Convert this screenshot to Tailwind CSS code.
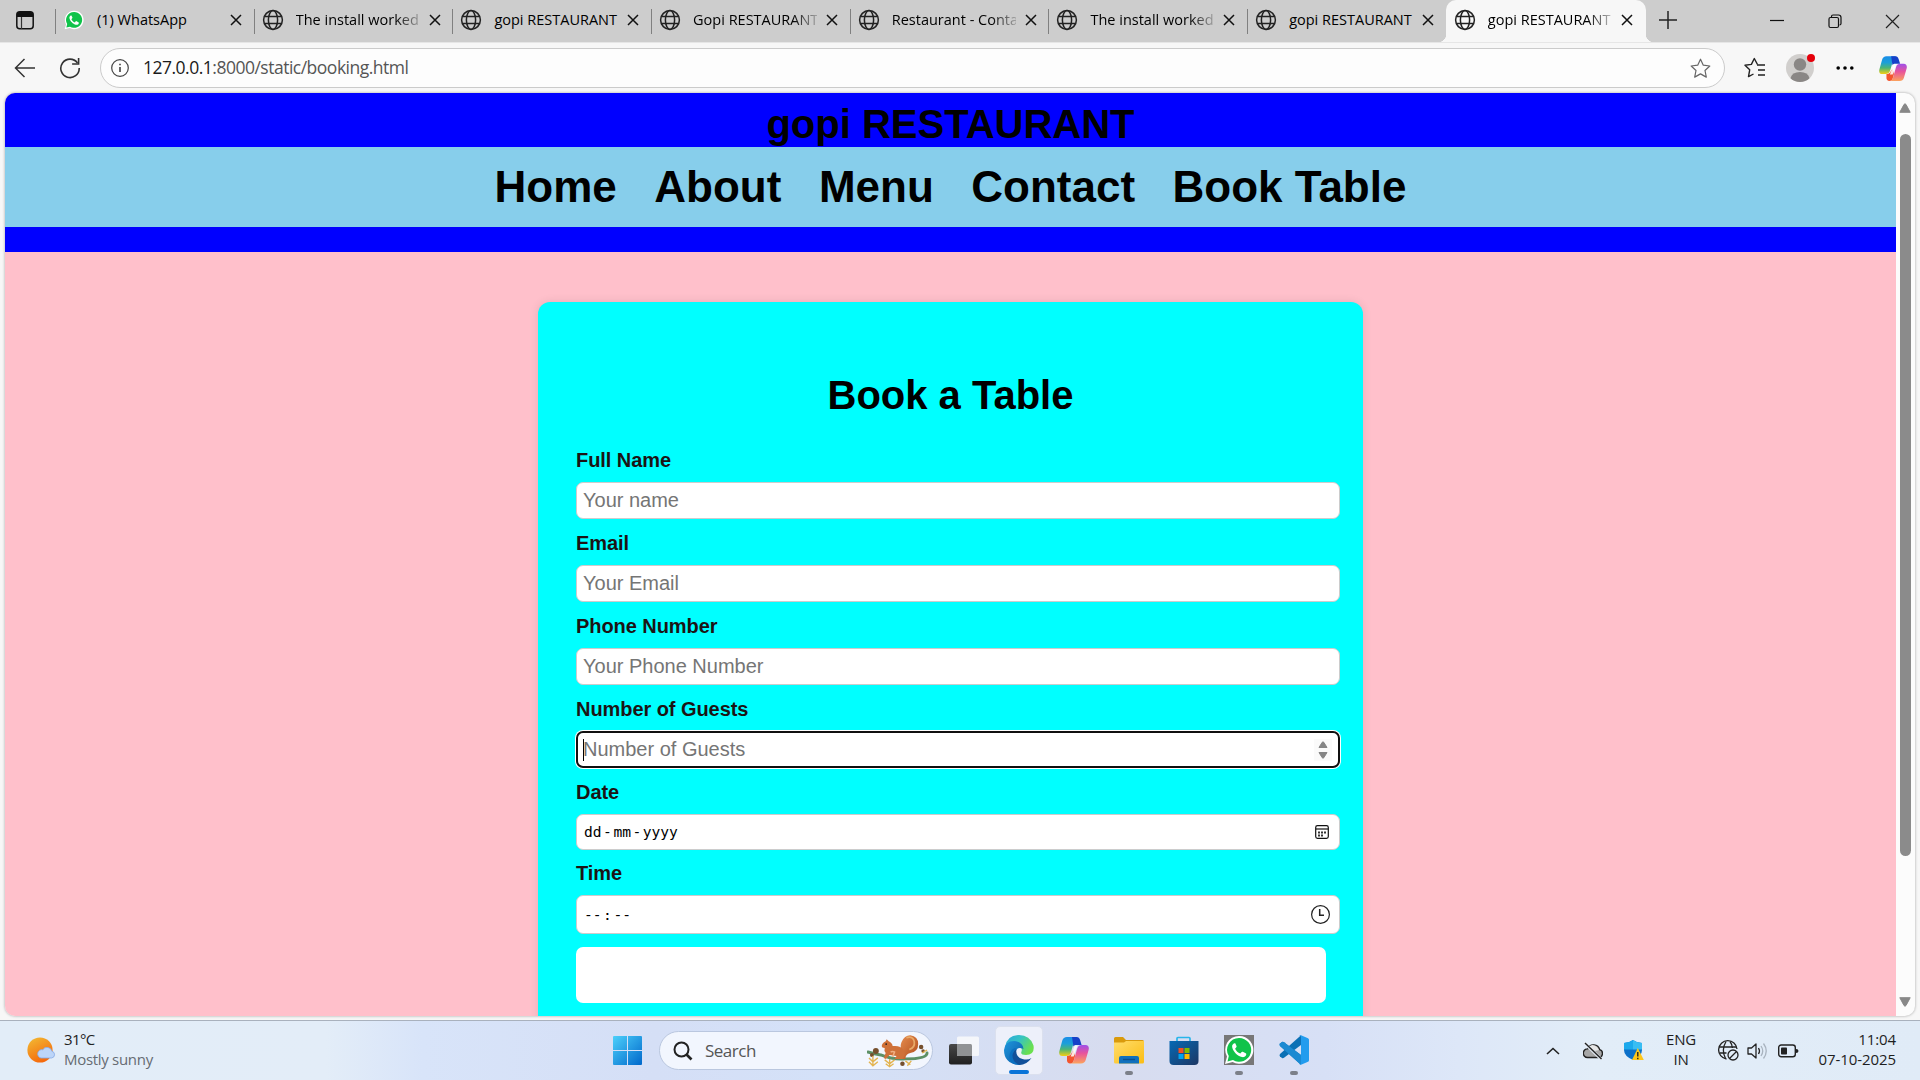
<!DOCTYPE html>
<html lang="en">
<head>
<meta charset="utf-8">
<title>gopi RESTAURANT</title>
<script src="https://cdn.jsdelivr.net/npm/@tailwindcss/browser@4"></script>
</head>
<body class="w-[1920px] h-[1080px] overflow-hidden flex flex-col bg-[#f7f7f7] font-['Open_Sans',sans-serif] text-black">
<svg width="0" height="0" class="absolute">
  <defs>
    <linearGradient id="cpA" x1="0" y1="0" x2="0" y2="1"><stop offset="0" stop-color="#1a8de8"/><stop offset=".35" stop-color="#1c9fd9"/><stop offset=".65" stop-color="#4cb576"/><stop offset="1" stop-color="#f7cf12"/></linearGradient>
    <linearGradient id="cpB" x1="0" y1="0" x2="0" y2="1"><stop offset="0" stop-color="#9f50e8"/><stop offset=".45" stop-color="#e8549c"/><stop offset="1" stop-color="#fca35c"/></linearGradient>
    <linearGradient id="winG" x1="0" y1="0" x2="1" y2="1"><stop offset="0" stop-color="#4cd0fb"/><stop offset="1" stop-color="#0068cb"/></linearGradient>
    <linearGradient id="sunG" x1="0" y1="0" x2=".5" y2="1"><stop offset="0" stop-color="#f2bd35"/><stop offset="1" stop-color="#f56a0c"/></linearGradient>
    <linearGradient id="edgeT" x1="0" y1="0" x2="1" y2=".5"><stop offset="0" stop-color="#2aa5dc"/><stop offset=".5" stop-color="#35c3c4"/><stop offset="1" stop-color="#6be04f"/></linearGradient>
    <linearGradient id="edgeB" x1="0" y1="0" x2="1" y2="1"><stop offset="0" stop-color="#1e96dd"/><stop offset="1" stop-color="#0c59a4"/></linearGradient>
    <linearGradient id="foldG" x1="0" y1="0" x2="1" y2="1"><stop offset="0" stop-color="#ffdc6b"/><stop offset="1" stop-color="#fbbd13"/></linearGradient>
    <linearGradient id="storeG" x1="0" y1="0" x2="1" y2="1"><stop offset="0" stop-color="#0669b4"/><stop offset="1" stop-color="#1d3764"/></linearGradient>
    <linearGradient id="tvG" x1="0" y1="0" x2="0" y2="1"><stop offset="0" stop-color="#484848"/><stop offset="1" stop-color="#202020"/></linearGradient>
    <linearGradient id="sqG" x1="0" y1="0" x2="1" y2="1"><stop offset="0" stop-color="#e58c4e"/><stop offset="1" stop-color="#b04d1c"/></linearGradient>
    <symbol id="globe" viewBox="0 0 22 22"><g fill="none" stroke="#222" stroke-width="1.5"><circle cx="11" cy="11" r="9.4"/><ellipse cx="11" cy="11" rx="4.6" ry="9.4"/><path d="M2.5 7.6h17M2.5 14.4h17"/></g></symbol>
    <symbol id="close" viewBox="0 0 12 12"><path d="M1 1l10 10M11 1L1 11" fill="none" stroke="#111" stroke-width="1.5"/></symbol>
    <symbol id="wa" viewBox="0 0 30 30"><path d="M15 1a13.8 13.8 0 0 0-12 20.6L1 29l7.600-2A13.900 13.900 0 1 0 15 1z" fill="#fff"/><path d="M15 3a11.900 11.900 0 0 0-10.200 18L3.500 26.400 9 25A11.900 11.900 0 1 0 15 3z" fill="#10c34a"/><path d="M10.500 8.200c-1.500.3-2.800 2-2.300 4.100 1 4.500 5.200 8.700 9.700 9.800 2 .4 3.900-.6 4.300-2.300.2-.9 0-1.300-.5-1.600l-2.900-1.400c-.6-.3-1-.1-1.400.4l-1.100 1.400c-2.300-.8-4.200-2.600-5.200-4.900l1.200-1.500c.4-.4.4-.8.200-1.200l-1.100-2.400c-.2-.4-.5-.5-.9-.4z" fill="#fff"/></symbol>
    <symbol id="copilot" viewBox="0 0 30 28"><path d="M8 1h11.500c-2 0-3.600 1.500-4.200 3.600L12 16c-.8 3-2.500 4-5 4H3.500C.5 20-.3 17.500.4 15L3.300 4.600C4 2.300 5.500 1 8 1z" fill="url(#cpA)"/><path d="M13 1h4.500c2 0 3 1.200 3.600 3.100L22.600 9h-5.200c-1.600 0-2.600.6-3 1.600z" fill="#1641c8"/><path d="M22 27.500H11c2 0 3.500-1.500 4-3.600l3.200-11.300C19 10 20.500 9 23 9h3.500c3 0 3.800 2.500 3.100 5l-2.900 10c-.7 2.300-2.200 3.500-4.700 3.500z" fill="url(#cpB)"/><path d="M8 20c2.500 0 4-1 4.600-3l2.100-3 1.300 6-1.200 4.200c-.6 2-1.800 3.300-3.800 3.300-1.700 0-2.600-1-3-2.700z" fill="#f4552e"/><path d="M15.700 9.500h2.800l-3.800 11h-3z" fill="#fff" opacity=".85"/></symbol>
  </defs>
</svg>

<!-- Tab strip -->
<div class="h-[42px] shrink-0 flex bg-[#cdcdcd] text-[14.500px]">
  <div class="w-[55px] pl-[16px] pt-[11px]">
    <svg width="18" height="19" viewBox="0 0 18 19"><rect x=".8" y=".8" width="16.400" height="17" rx="3" fill="none" stroke="#111" stroke-width="1.500"/><path d="M1 6V3q0-2 2-2h12q2 0 2 2v3z" fill="#111"/><path d="M5.500 6v12" stroke="#333" stroke-width="1.200"/></svg>
  </div>
  <div id="tabs" class="flex h-[42px]"></div>
  <div class="flex-1 flex">
    <svg class="ml-[13px] mt-[11px]" width="18" height="18" viewBox="0 0 18 18"><path d="M9 0v18M0 9h18" stroke="#222" stroke-width="1.500"/></svg>
    <svg class="ml-[93px] mt-[14px]" width="14" height="14"><path d="M0 6.500h14" stroke="#111" stroke-width="1.200"/></svg>
    <svg class="ml-[44px] mt-[14px]" width="15" height="15" fill="none" stroke="#111" stroke-width="1.200"><rect x="1" y="3.500" width="9.500" height="10" rx="1.500"/><path d="M3.500 3V2.500q0-1.500 1.500-1.500h5.500q2.500 0 2.500 2.500v6q0 1.500-1.500 1.500"/></svg>
    <svg class="ml-[42px] mt-[14px]" width="15" height="15"><path d="M1 1l13 13M14 1L1 14" stroke="#222" stroke-width="1.200"/></svg>
  </div>
</div>

<!-- Toolbar -->
<div class="h-[51px] shrink-0 flex items-center border-t border-[#e6e6e6] bg-[#f7f7f7] pl-[14px]">
  <svg width="22" height="20" viewBox="0 0 22 20" fill="none" stroke="#333" stroke-width="1.500"><path d="M21 10H2M10.500 1L1.500 10l9 9"/></svg>
  <svg class="ml-[23px]" width="22" height="22" viewBox="0 0 22 22" fill="none" stroke="#333" stroke-width="1.600"><path d="M18.500 6A9.200 9.200 0 1 0 20.200 11"/><path d="M19.600 1v6h-6.500"/></svg>
  <div class="ml-[19px] w-[1625px] h-[40px] rounded-full border border-[#cbcbcb] bg-[#fdfdfd] flex items-center pl-[10px] pr-[13px]">
    <svg width="18" height="18" viewBox="0 0 18 18"><circle cx="9" cy="9" r="8.300" fill="none" stroke="#444" stroke-width="1.200"/><path d="M9 8v5M9 4.800v1.500" stroke="#333" stroke-width="1.500"/></svg>
    <span class="ml-[14px] text-[17.500px] tracking-[-0.5px] text-[#555] leading-none"><span class="text-[#1a1a1a]">127.0.0.1</span>:8000/static/booking.html</span>
    <svg class="ml-auto" width="21" height="21" viewBox="0 0 21 21"><path d="M10.500 1.200l2.800 6 6.500.8-4.800 4.500 1.300 6.600-5.800-3.200-5.800 3.200L6 12.500 1.200 8l6.500-.8z" fill="none" stroke="#666" stroke-width="1.200" stroke-linejoin="round"/></svg>
  </div>
  <svg class="ml-[19px] mr-px" width="22" height="22" viewBox="0 0 22 22" fill="none" stroke="#222" stroke-width="1.400" stroke-linejoin="round"><path d="M13.500 7.500L10.300 1.500 7.400 7.400 1 8.300l4.700 4.500-1.200 6.800 5-2.600"/><path d="M13 8h8M14 13h7M14 18h7"/></svg>
  <div class="relative ml-[19px]">
    <svg width="28" height="28" viewBox="0 0 28 28"><circle cx="14" cy="14" r="14" fill="#d1cfcd"/><circle cx="14" cy="10.500" r="6.200" fill="#8a8785"/><path d="M4.500 24.200Q6 18 14 18t9.500 6.200Q19.500 28 14 28t-9.500-3.800z" fill="#8a8785"/></svg>
    <div class="absolute left-[21px] top-0 size-[8px] rounded-full bg-[#e5000b]"></div>
  </div>
  <svg class="ml-[22px]" width="18" height="4"><circle cx="2.200" cy="2" r="1.800"/><circle cx="9" cy="2" r="1.800"/><circle cx="15.800" cy="2" r="1.800"/></svg>
  <svg class="ml-[25px]" width="28" height="27"><use href="#copilot"/></svg>
</div>

<!-- Page viewport -->
<div class="h-[927px] shrink-0 pl-[5px] pr-[5px]">
<div class="h-[923px] flex overflow-hidden rounded-[10px] shadow-[0_0_3px_rgba(0,0,0,0.35)] bg-[#fcfcfc] font-['Liberation_Sans',Arial,sans-serif] font-bold">
  <div class="w-[1891px] h-full bg-[#ffc0cb] overflow-hidden">
    <header class="h-[159px] bg-[#0000ff] flex flex-col">
      <h1 class="h-[54px] pt-[8px] text-center text-[40px] leading-[46px]">gopi RESTAURANT</h1>
      <nav class="h-[80px] bg-[#87ceeb] flex justify-center gap-[37.500px] text-[44px] leading-[51px] pt-[14px]">
        <a>Home</a><a>About</a><a>Menu</a><a>Contact</a><a>Book Table</a>
      </nav>
    </header>
    <main class="mt-[50px] mx-auto w-[825px] h-[800px] rounded-[12px] bg-[#00ffff] shadow-[0_0_10px_rgba(0,0,0,0.1)] pl-[38px] pr-[23px] pt-[70px]">
      <h2 class="h-[74px] -ml-[15px] text-center text-[40px] leading-[46px]">Book a Table</h2>
      <form class="flex flex-col text-[20px] leading-[23px] text-[#1c1414]">
        <label class="h-[36px] pt-[3px] tracking-[-0.06px]">Full Name</label>
        <div class="h-[37px] rounded-[7px] border border-[#ccc] bg-white px-[6px] leading-[35px] font-normal text-[#757575]">Your name</div>
        <label class="h-[46px] pt-[13px] tracking-[-0.06px]">Email</label>
        <div class="h-[37px] rounded-[7px] border border-[#ccc] bg-white px-[6px] leading-[35px] font-normal text-[#757575]">Your Email</div>
        <label class="h-[46px] pt-[13px] tracking-[-0.06px]">Phone Number</label>
        <div class="h-[37px] rounded-[7px] border border-[#ccc] bg-white px-[6px] leading-[35px] font-normal text-[#757575]">Your Phone Number</div>
        <label class="h-[46px] pt-[13px] tracking-[-0.06px]">Number of Guests</label>
        <div class="h-[37px] rounded-[7px] border-2 border-[#101010] ring-1 ring-white bg-white pl-[5px] pr-[6px] flex items-center font-normal text-[#757575]">
          <span class="w-px h-[22px] bg-black -mr-px"></span><span class="leading-[33px]">Number of Guests</span>
          <span class="ml-auto w-[18px] h-[22px] bg-[#fafafa] flex items-center justify-center"><svg width="10" height="18"><path d="M1 6.500h8L5.800 1.300q-.8-1-1.600 0zM1 11.500h8l-3.200 5.200q-.8 1-1.600 0z" fill="#858585"  stroke="#858585"/></svg></span>
        </div>
        <label class="h-[46px] pt-[13px] tracking-[-0.06px]">Date</label>
        <div class="h-[36px] rounded-[7px] border border-[#ccc] bg-white pl-[7px] pr-[10px] flex items-center font-normal text-black font-['DejaVu_Sans_Mono',monospace] text-[14.600px]">
          <div class="flex pb-[2px]"><span>dd</span><span class="px-[1.500px]">-</span><span>mm</span><span class="px-[1.500px]">-</span><span>yyyy</span></div>
          <svg class="ml-auto" width="14" height="14"><rect x=".7" y=".7" width="12.600" height="12.600" rx="1.800" fill="none" stroke="#111" stroke-width="1.200"/><path d="M1 4h12" stroke="#111" stroke-width="1.200"/><path d="M3 7.500h8" stroke="#333" stroke-width="2" stroke-dasharray="2 1"/><path d="M3 10.500h5" stroke="#333" stroke-width="2" stroke-dasharray="2 1"/></svg>
        </div>
        <label class="h-[45px] pt-[12px] tracking-[-0.06px]">Time</label>
        <div class="h-[39px] rounded-[7px] border border-[#ccc] bg-white pl-[7px] pr-[9px] flex items-center font-normal text-black font-['DejaVu_Sans_Mono',monospace] text-[14.600px]">
          <span>--</span><span class="px-[1.500px]">:</span><span>--</span>
          <svg class="ml-auto" width="19" height="19" fill="none" stroke="#222"><circle cx="9.500" cy="9.500" r="8.900" stroke-width="1.200"/><path d="M8.700 4v6.200h4.300" stroke-width="1.500"/></svg>
        </div>
        <div class="mt-[13px] w-[750px] h-[56px] rounded-[7px] bg-white"></div>
      </form>
    </main>
  </div>
  <div class="flex-1 flex flex-col items-center pt-[10px] pb-[9px] pr-px">
    <svg width="12" height="10"><path d="M.8 9.300L5 1.500q1-1.500 2 0l4.200 7.800z" fill="#888" stroke="#888"/></svg>
    <div class="mt-[21px] w-[11px] h-[722px] rounded-full bg-[#8b8b8b]"></div>
    <svg class="mt-auto" width="12" height="10"><path d="M.8.700L5 8.500q1 1.500 2 0L11.200.700z" fill="#888" stroke="#888"/></svg>
  </div>
</div>
</div>

<!-- Taskbar -->
<footer class="h-[60px] shrink-0 flex items-center border-t border-[#a9b1bd] bg-[linear-gradient(90deg,#e2edf8_0%,#e3edf8_17%,#d8e4f9_22%,#d5dff6_34%,#d4e1f8_43%,#d7dcef_58%,#d7e0f6_69%,#dde7f8_76%,#e2edf8_83%,#e0ebf7_100%)]">
  <div class="w-[600px] flex items-center pl-[26px]">
    <svg width="30" height="28" viewBox="0 0 30 28"><circle cx="14" cy="13" r="12.600" fill="url(#sunG)"/><path d="M15 21h10.500a3.400 3.400 0 0 0 .4-6.700 5 5 0 0 0-9.100-1.600A4.200 4.200 0 0 0 15 21z" fill="#bcd5f8" stroke="#86a9e5" stroke-width=".8"/></svg>
    <div class="ml-[8px] pb-[4px] text-[15px] leading-[20px] tracking-[-0.3px]"><div class="text-[#222] tracking-[-0.6px]">31°C</div><div class="text-[#666b72]">Mostly sunny</div></div>
  </div>
  <div class="w-[59px] flex pl-[13px]">
    <svg width="29" height="29"><path d="M0 1q0-1 1-1h13v14H0zM15 0h13q1 0 1 1v13H15zM0 15h14v14H1q-1 0-1-1zM15 15h14v13q0 1-1 1H15z" fill="url(#winG)"/></svg>
  </div>
  <div class="w-[274px] h-[39px] rounded-full border border-[#bac7df] bg-[#f2f6fe] flex items-center pl-[13px] pr-[2px]">
    <svg width="20" height="20" fill="none" stroke="#222"><circle cx="8.500" cy="8.500" r="7" stroke-width="2"/><path d="M13.500 13.500l5 5" stroke-width="2.600"/></svg>
    <span class="ml-[12px] text-[17px] tracking-[-0.5px] text-[#555]">Search</span>
    <svg class="ml-auto" width="63" height="34" viewBox="0 0 64 34">
      <path d="M1 18q7 2 13 3 12 5 25 4 22 0 22-6" fill="none" stroke="#5d9066" stroke-width="3" stroke-linecap="round"/>
      <path d="M35 25l1-6q-3-6-1-11 3-7 9-7 8 1 8 9 0 8-8 9-5 1-5 6z" fill="url(#sqG)"/><path d="M40 3.500q7-2 8 4t-5 8" fill="none" stroke="#e8aa69" stroke-width="1.800"/>
      <path d="M15 12q0-3 4-5l1-2 2 2q4 2 4 5 8-1 11 4 3 6-1 9h-8l2-3-7-1-4 4-2-1 2-5q-2-2-1-5-3 0-3-2z" fill="#cf7139"/>
      <path d="M24 18q2-1 4 0l-2 5" fill="none" stroke="#f0b083" stroke-width="1.500"/><circle cx="19.500" cy="10" r=".9" fill="#222"/>
      <g fill="#76502d"><circle cx="9" cy="17" r="3"/><circle cx="5" cy="21" r="2"/><circle cx="55" cy="13" r="2.300"/><circle cx="36" cy="30" r="2.300"/><circle cx="57" cy="17" r="1.800"/></g>
      <g fill="none" stroke="#e3b451" stroke-width="1.400"><path d="M6 22v9M2 24l4 4 5-4M2 28l4 4 5-4M23 25v8M18 26l5 4 5-4M19 30l4 3 4-3M39 27l5 4M41 32l4-5M56 19l5-3"/></g>
    </svg>
  </div>
  <div class="w-[58px] flex pl-[16px]">
    <svg width="30" height="29"><rect x="0" y="8" width="23" height="20.500" rx="2" fill="url(#tvG)"/><rect x="8" y=".5" width="22" height="19.500" rx="1.500" fill="#f7f8fb" opacity=".9"/><path d="M8 8h13.500q1.500 0 1.500 1.500V20H9.500Q8 20 8 18.500z" fill="#909294"/></svg>
  </div>
  <div class="flex h-full items-center">
    <div class="w-[55px] h-full flex justify-center pt-[5px] items-start">
      <div class="w-[48px] h-[49px] rounded-[5px] bg-[#edf0fa] border border-[#dbe0ee] flex flex-col items-center pt-[8px]">
        <svg width="30" height="30" viewBox="0 0 30 30"><path d="M1 12Q3 0 15 0q11 0 14.500 10.500Q31 20 22 20q-6 0-4.500-3.500Q19 12 13 11 5 9 1 12z" fill="url(#edgeT)"/><path d="M0 15Q1 6 10 6q9 1 9.500 8-6-3-7.500 2-2 7 4 13.900Q0 29 0 15z" fill="url(#edgeB)"/><path d="M12.500 13Q7 17 10 23q3 5 10 5-5 3-11 .8Q4 24 6 18q2-5 6.500-5z" fill="#0b6fc0"/><path d="M12.500 14q-1.500 8 6 10 5 1.500 9-1-5 7-12 7Q8 27 8.500 20q1-4.500 4-6z" fill="#11509a"/></svg>
        <div class="mt-[5px] w-[20px] h-[4px] shrink-0 rounded-full bg-[#0a74d8]"></div>
      </div>
    </div>
    <div class="w-[55px] flex justify-center -mt-px"><svg width="30" height="28"><use href="#copilot"/></svg></div>
    <div class="w-[55px] h-full flex flex-col items-center pt-[16px]">
      <svg width="30" height="27"><path d="M0 1.500Q0 0 1.500 0H9l3 3h16.500Q30 3 30 4.500V10H0z" fill="#d99a0c"/><path d="M0 5.500h10l2-1.500h18v21q0 1.500-1.500 1.500h-27Q0 26.500 0 25z" fill="url(#foldG)"/><path d="M5 26.500V21q0-2 2-2h16q2 0 2 2v5.500z" fill="#1070bd"/><path d="M9 22.500h12" stroke="#0a4f90" stroke-width="1.400"/></svg>
      <div class="mt-[7px] w-[8px] h-[4px] rounded-full bg-[#7c8089]"></div>
    </div>
    <div class="w-[55px] flex justify-center"><svg width="30" height="30"><path d="M8 6V2.500Q8 1.500 9 1.500h11q1 0 1 1V6" fill="none" stroke="#28b5ea" stroke-width="1.700"/><path d="M.5 5h29v20q0 4-4 4h-21q-4 0-4-4z" fill="url(#storeG)"/><path d="M9.500 12h5v5h-5z" fill="#f25022"/><path d="M15.500 12h5v5h-5z" fill="#7fba00"/><path d="M9.500 18h5v5h-5z" fill="#00a4ef"/><path d="M15.500 18h5v5h-5z" fill="#ffb900"/></svg></div>
    <div class="w-[55px] h-full flex flex-col items-center pt-[14px]">
      <svg class="bg-[#777]" width="30" height="30"><use href="#wa"/></svg>
      <div class="mt-[6px] w-[8px] h-[4px] rounded-full bg-[#7c8089]"></div>
    </div>
    <div class="w-[55px] h-full flex flex-col items-center pt-[14px]">
      <svg width="30" height="30" viewBox="0 0 30 30"><path d="M1 8.500l2-1.500q1-.5 2 .2L22 20v9.700L1 11q-1-1.200 0-2.500z" fill="#0879bd"/><path d="M1 21.500L3 23q1 .5 2-.2L22 10V.3L1 19q-1 1.200 0 2.500z" fill="#0a70b5"/><path d="M22 .3l7 3q1 .5 1 1.500v20.400q0 1-1 1.500l-7 3q-1.200.3-2-.7 2 1 2-1.500v-25q0-2.500-2-1.500.8-1 2-.7z" fill="#229cee"/><path d="M1 8.500l2-1.500q1-.5 2 .2L22 20v9q-1 .5-2-.7L1 11q-1-1.200 0-2.500z" fill="#1b8ad2"/></svg>
      <div class="mt-[6px] w-[8px] h-[4px] rounded-full bg-[#7c8089]"></div>
    </div>
  </div>
  <div class="ml-auto flex items-center pr-[24px] text-[15px] leading-[20px] text-[#1e1e1e]">
    <svg width="14" height="8" fill="none" stroke="#222" stroke-width="1.600"><path d="M1 7l6-5.500L13 7"/></svg>
    <svg class="ml-[23px]" width="20" height="18"><path d="M4.500 15.500h11a4 4 0 0 0 1.200-7.800 6.300 6.300 0 0 0-12-.8 4.300 4.300 0 0 0-.2 8.600z" fill="#a7a7a7" stroke="#222" stroke-width="1.400"/><path d="M6 5Q9 1 14 5l2 3-4 1z" fill="#e6e6e6"/><path d="M1 .5l17.500 17" stroke="#e7eef7" stroke-width="3"/><path d="M2 1l16.500 16" stroke="#222" stroke-width="1.400"/></svg>
    <svg class="ml-[21px]" width="20" height="21"><path d="M9 0q4 3 9 3v7q0 6-9 10-9-4-9-10V3q5 0 9-3z" fill="#0c70c9"/><path d="M9 0v9.500H0V3q5 0 9-3z" fill="#1ba9ec"/><path d="M9 0q4 3 9 3v6.500H9z" fill="#38bdf3"/><path d="M13.800 8l6 12H8z" fill="#fec619"/><path d="M13.800 12v4.500M13.800 17.700v1.500" stroke="#222" stroke-width="1.400"/></svg>
    <div class="ml-[19px] pb-[3px] w-[36px] text-center tracking-[-0.2px]">ENG<br>IN</div>
    <svg class="ml-[19px]" width="21" height="21" fill="none" stroke="#222" stroke-width="1.300"><path d="M8.500 19A9.200 9.200 0 1 1 19 9"/><path d="M1.500 7h17M1.500 13h7M7.500 18.500Q3 10 8 1.500M12 1.500Q14 4 14.400 8"/><circle cx="15" cy="15" r="5"/><path d="M11.500 18.500l7-7"/></svg>
    <svg class="ml-[8px]" width="21" height="18" fill="none" stroke="#222" stroke-width="1.300"><path d="M1 6h3.500L9 2v14l-4.500-4H1z" stroke-linejoin="round"/><path d="M11.500 6q2 3 0 6"/><path d="M14 4q3.500 5 0 10M16.500 1.500q5.500 7.500 0 15" stroke="#a9b3bf"/></svg>
    <svg class="ml-[10px]" width="21" height="14"><rect x=".7" y="1" width="16.600" height="11.800" rx="2.500" fill="none" stroke="#222" stroke-width="1.400"/><rect x="3" y="3.500" width="6" height="7" rx=".8" fill="#222"/><path d="M18 5q2.500 0 2.500 2T18 9z" fill="#222"/></svg>
    <div class="ml-[18px] pb-[4px] w-[79px] text-right tracking-[-0.08px] whitespace-nowrap">11:04<br>07-10-2025</div>
  </div>
</footer>

<script>
const tabs = ["(1) WhatsApp","The install worked","gopi RESTAURANT","Gopi RESTAURANT","Restaurant - Conta","The install worked","gopi RESTAURANT","gopi RESTAURANT"];
document.getElementById("tabs").innerHTML = tabs.map((t, i) => {
  const active = i === tabs.length - 1;
  const fade = [1,3,4,5,7].includes(i) ? "[mask-image:linear-gradient(90deg,#000_80%,rgba(0,0,0,0.2)_100%)]" : "";
  const icon = i ? '<svg width="22" height="22"><use href="#globe"/></svg>' : '<svg width="20" height="20" class="mx-px"><use href="#wa"/></svg>';
  return `<div class="${active ? "relative w-[200px] bg-[#f7f7f7] rounded-t-[10px]" : "w-[198.700px]"} h-[42px] flex">
    <span class="${active ? "bg-transparent" : "bg-[#808080]"} w-px mt-[9px] h-[25px]"></span>
    <span class="flex items-center h-[40px] w-[197px] pl-[7px]">${icon}<span class="ml-[12px] w-[124px] whitespace-nowrap leading-[22px] ${fade}">${t}</span><svg class="ml-[9px]" width="12" height="12"><use href="#close"/></svg></span>
    ${active ? '<i class="absolute -left-[8px] bottom-0 size-[8px] bg-[radial-gradient(circle_at_0_0,transparent_8px,#f7f7f7_8.500px)]"></i><i class="absolute -right-[8px] bottom-0 size-[8px] bg-[radial-gradient(circle_at_100%_0,transparent_8px,#f7f7f7_8.500px)]"></i>' : ""}
  </div>`;
}).join("");
</script>
</body>
</html>
